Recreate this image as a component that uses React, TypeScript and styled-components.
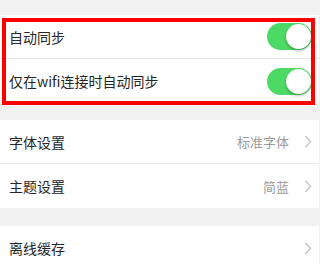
import { FC } from 'react'
import styled, { createGlobalStyle } from 'styled-components'

const GlobalStyle = createGlobalStyle`
  html, body {
    margin: 0;
    padding: 0;
    background: #f2f2f2;
    font-family: "Noto Sans CJK SC", "Noto Sans", sans-serif;
  }
`

const Page = styled.div`
  width: 319px;
  height: 264px;
  padding-top: 15px;
  box-sizing: border-box;
  background: #f2f2f2;
  overflow: hidden;
`

const Section = styled.div<{ gap?: number }>`
  position: relative;
  background: #fff;
  margin-bottom: ${props => (props.gap ? props.gap : 17)}px;
`

const Row = styled.div<{ last?: boolean }>`
  display: flex;
  align-items: center;
  justify-content: space-between;
  height: 44px;
  padding: 0 7px 0 9px;
  box-sizing: border-box;
  border-bottom: ${props => (props.last ? 'none' : '1px solid #e8e8e8')};
`

const Label = styled.span`
  font-size: 14px;
  color: #262626;
`

const Right = styled.div`
  display: flex;
  align-items: center;
  gap: 15px;
`

const Value = styled.span`
  font-size: 13px;
  color: #9a9a9a;
`

const Track = styled.div<{ on?: boolean }>`
  position: relative;
  width: 45px;
  height: 27px;
  border-radius: 14px;
  background: ${props => (props.on ? '#4cd964' : '#e5e5e5')};
`

const Knob = styled.div`
  position: absolute;
  top: 1px;
  right: 1px;
  width: 25px;
  height: 25px;
  border-radius: 50%;
  background: #fff;
  box-shadow: 0 2px 3px rgba(0, 0, 0, 0.25);
`

const Highlight = styled.div`
  position: absolute;
  left: 2px;
  top: 3px;
  width: 313px;
  height: 87px;
  box-sizing: border-box;
  border: 4px solid #ff0000;
  pointer-events: none;
`

const Switch: FC<{ on?: boolean }> = ({ on }) => (
  <Track on={on}>
    <Knob />
  </Track>
)

const Chevron: FC = () => (
  <svg width='8' height='13' viewBox='0 0 8 13'>
    <polyline points='1.5,1 6.5,6.5 1.5,12' fill='none' stroke='#c4c4c4' strokeWidth='1.4' />
  </svg>
)

export default function App() {
  return (
    <Page>
      <GlobalStyle />
      <Section>
        <Row>
          <Label>自动同步</Label>
          <Switch on />
        </Row>
        <Row last>
          <Label>仅在wifi连接时自动同步</Label>
          <Switch on />
        </Row>
        <Highlight />
      </Section>
      <Section gap={18}>
        <Row>
          <Label>字体设置</Label>
          <Right>
            <Value>标准字体</Value>
            <Chevron />
          </Right>
        </Row>
        <Row last>
          <Label>主题设置</Label>
          <Right>
            <Value>简蓝</Value>
            <Chevron />
          </Right>
        </Row>
      </Section>
      <Section>
        <Row last>
          <Label>离线缓存</Label>
          <Right>
            <Chevron />
          </Right>
        </Row>
      </Section>
    </Page>
  )
}
